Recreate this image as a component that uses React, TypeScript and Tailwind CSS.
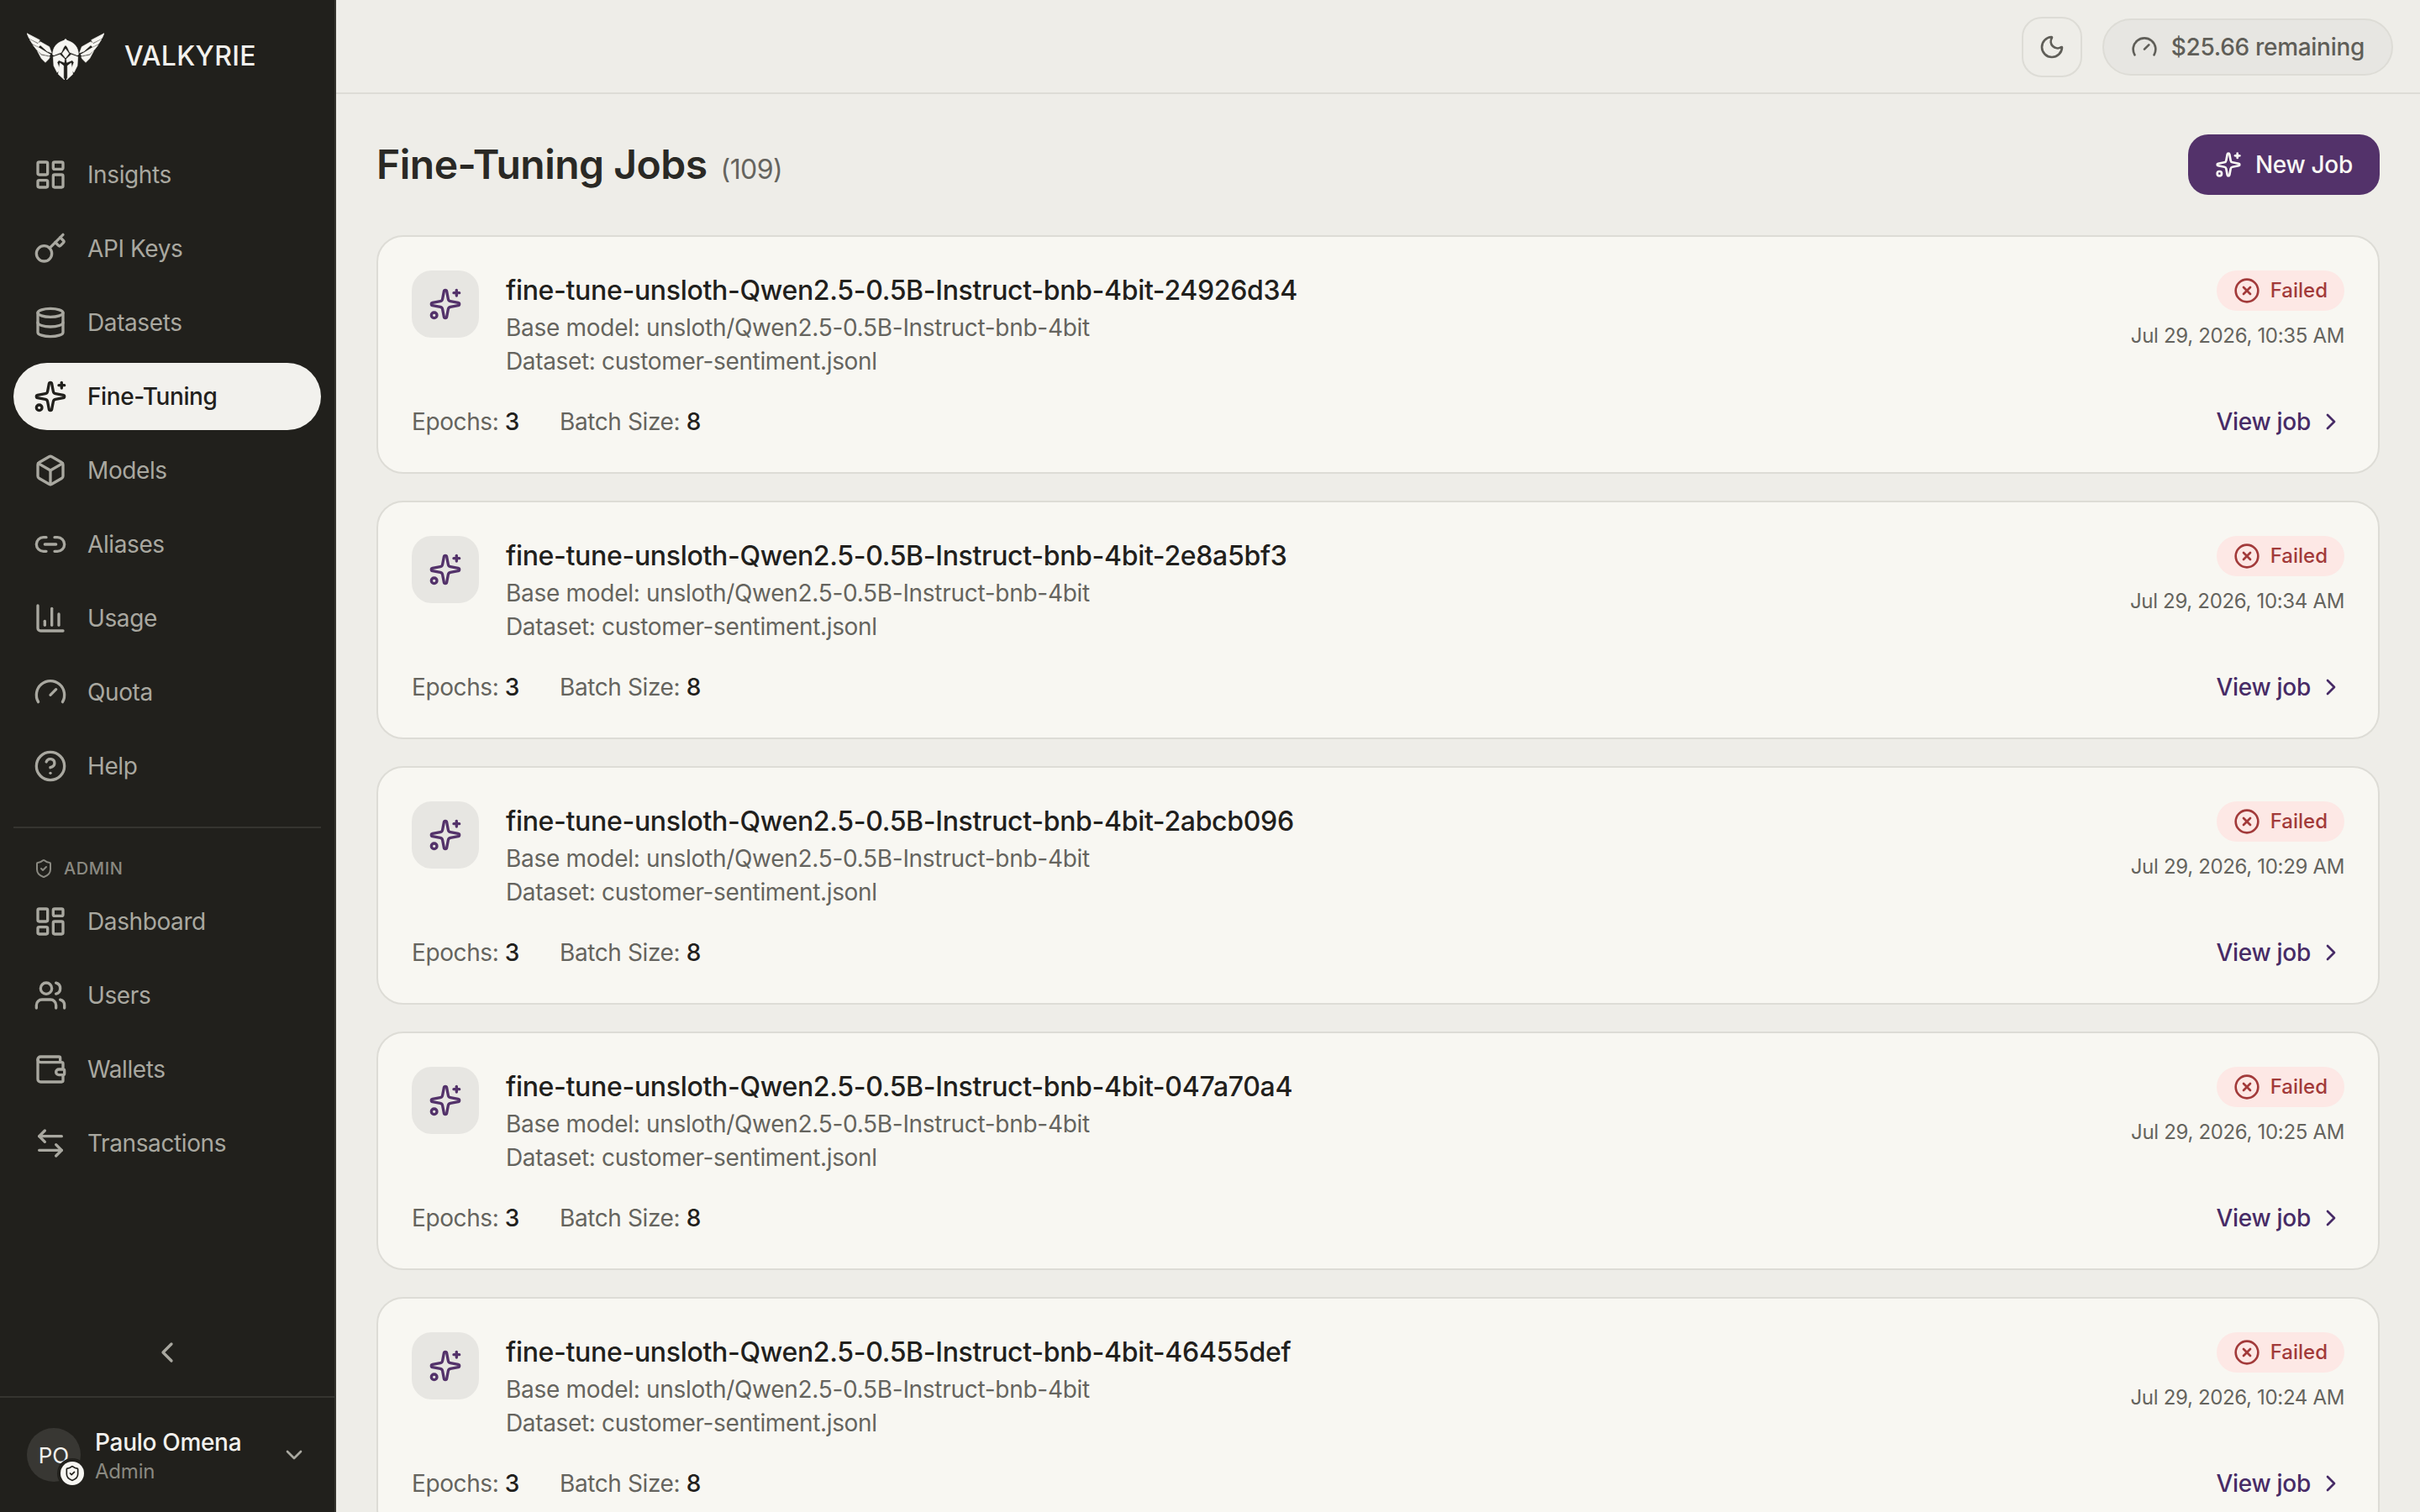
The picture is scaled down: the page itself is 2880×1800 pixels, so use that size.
import {
  ArrowLeftRight,
  Box,
  ChartColumn,
  ChevronDown,
  ChevronLeft,
  ChevronRight,
  CircleHelp,
  CircleX,
  Database,
  Gauge,
  Key,
  LayoutDashboard,
  Link2,
  Moon,
  ShieldCheck,
  Sparkles,
  Users,
  Wallet,
} from 'lucide-react';

const mainNav = [
  { label: 'Insights', icon: LayoutDashboard },
  { label: 'API Keys', icon: Key },
  { label: 'Datasets', icon: Database },
  { label: 'Fine-Tuning', icon: Sparkles, active: true },
  { label: 'Models', icon: Box },
  { label: 'Aliases', icon: Link2 },
  { label: 'Usage', icon: ChartColumn },
  { label: 'Quota', icon: Gauge },
  { label: 'Help', icon: CircleHelp },
];

const adminNav = [
  { label: 'Dashboard', icon: LayoutDashboard },
  { label: 'Users', icon: Users },
  { label: 'Wallets', icon: Wallet },
  { label: 'Transactions', icon: ArrowLeftRight },
];

const jobs = [
  { id: '24926d34', date: 'Jul 29, 2026, 10:35 AM' },
  { id: '2e8a5bf3', date: 'Jul 29, 2026, 10:34 AM' },
  { id: '2abcb096', date: 'Jul 29, 2026, 10:29 AM' },
  { id: '047a70a4', date: 'Jul 29, 2026, 10:25 AM' },
  { id: '46455def', date: 'Jul 29, 2026, 10:24 AM' },
];

const WingAndHelmetHalf = () => (
  <>
    <path d="M18 20 64 44 58 54 26 38Z" />
    <path d="M28 42 56 57 66 50 98 68 106 90 90 84 66 62 60 68 38 58Z" />
    <path d="M40 62 62 72 88 88 102 96 98 100 70 94 54 80Z" />
    <path d="M56 84 70 98 100 104 96 112 84 124 70 110Z" />
    <path d="M110 96C110 70 126 52 150 46V68L141 88 114 98Z" />
    <path d="M112 104 136 96 153 112 151 124 132 116 126 124 136 150 126 160 114 136Z" />
    <path d="M136 126 149 136V178L152 186 130 166Z" />
  </>
);

const Logo = () => (
  <svg
    viewBox="18 18 276 168"
    className="h-[56px] w-[92px] shrink-0"
    fill="#f7f6f2"
    stroke="#f7f6f2"
    strokeWidth={2}
    strokeLinejoin="round"
  >
    <WingAndHelmetHalf />
    <g transform="translate(312 0) scale(-1 1)">
      <WingAndHelmetHalf />
    </g>
    <path d="M156 40 164 48V70L156 62 148 70V48Z" />
    <path d="M156 76 168 92 156 108 144 92Z" />
  </svg>
);

const NavItem = ({ label, icon: Icon, active }: { label: string; icon: typeof Key; active?: boolean }) => (
  <div
    className={`flex h-[80px] items-center gap-[24px] rounded-full px-[24px] text-[28px] tracking-[-0.4px] ${
      active ? 'bg-[#f2f1ed] font-medium text-[#21201c]' : 'text-[#a9a8a0]'
    }`}
  >
    <Icon size={40} strokeWidth={2} className="shrink-0" />
    <span>{label}</span>
  </div>
);

const Sidebar = () => (
  <aside className="flex h-full w-[400px] shrink-0 flex-col border-r-2 border-[#35342f] bg-[#21201c]">
    <div className="flex h-[132px] items-center gap-[24px] pt-[2px] pl-[32px]">
      <Logo />
      <span className="text-[32px] font-medium tracking-[0.35px] text-[#f2f1ed]">VALKYRIE</span>
    </div>
    <nav className="mt-[36px] flex flex-col gap-[8px] px-[16px]">
      {mainNav.map((item) => (
        <NavItem key={item.label} {...item} />
      ))}
    </nav>
    <div className="mx-[16px] mt-[32px] border-t-2 border-[#35342f]" />
    <div className="mt-[32px] flex h-[32px] items-center gap-[12px] pl-[40px] text-[20px] font-medium tracking-[0.6px] text-[#8a8981]">
      <ShieldCheck size={24} strokeWidth={2} />
      <span>ADMIN</span>
    </div>
    <nav className="mt-[7px] flex flex-col gap-[8px] px-[16px]">
      {adminNav.map((item) => (
        <NavItem key={item.label} {...item} />
      ))}
    </nav>
    <div className="flex flex-1 items-end justify-center pb-[32px]">
      <ChevronLeft size={40} strokeWidth={2} className="text-[#a9a8a0]" />
    </div>
    <div className="flex h-[138px] items-center border-t-2 border-[#35342f] px-[32px]">
      <div className="relative flex h-[64px] w-[64px] shrink-0 items-center justify-center rounded-full bg-[#383733] text-[26px] text-[#f2f1ed]">
        PO
        <span className="absolute right-[-8px] bottom-[-8px] flex h-[36px] w-[36px] items-center justify-center rounded-full bg-[#21201c]">
          <span className="flex h-[28px] w-[28px] items-center justify-center rounded-full bg-[#f7f6f2] text-[#21201c]">
            <ShieldCheck size={20} strokeWidth={2} />
          </span>
        </span>
      </div>
      <div className="ml-[17px] flex flex-1 flex-col pt-[3px]">
        <span className="text-[28px] leading-[36px] font-medium tracking-[-0.3px] text-[#f2f1ed]">Paulo Omena</span>
        <span className="text-[24px] leading-[34px] tracking-[-0.2px] text-[#8a8981]">Admin</span>
      </div>
      <ChevronDown size={32} strokeWidth={2} className="text-[#a9a8a0]" />
    </div>
  </aside>
);

const Header = () => (
  <header className="flex h-[112px] shrink-0 items-center justify-end gap-[24px] border-b-2 border-[#dddcd6] pt-[2px] pr-[32px]">
    <button className="flex h-[72px] w-[72px] items-center justify-center rounded-[24px] border-2 border-[#dddcd6] text-[#5f5e58]">
      <Moon size={32} strokeWidth={2} />
    </button>
    <div className="flex h-[68px] items-center gap-[16px] rounded-full border-2 border-[#dddcd6] bg-[#e7e6e2] px-[32px] text-[28px] font-medium tracking-[-0.3px] text-[#5f5e58]">
      <Gauge size={32} strokeWidth={2} />
      <span>$25.66 remaining</span>
    </div>
  </header>
);

const JobCard = ({ id, date }: { id: string; date: string }) => (
  <div className="flex h-[284px] shrink-0 flex-col justify-between rounded-[32px] border-2 border-[#dddcd6] bg-[#f8f7f2] p-[40px]">
    <div className="flex items-start justify-between">
      <div className="flex gap-[32px]">
        <div className="flex h-[80px] w-[80px] items-center justify-center rounded-[24px] bg-[#e7e6e2] text-[#53326a]">
          <Sparkles size={40} strokeWidth={2} />
        </div>
        <div className="flex flex-col">
          <span className="text-[32px] leading-[48px] font-medium tracking-[-0.32px] text-[#21201c]">
            fine-tune-unsloth-Qwen2.5-0.5B-Instruct-bnb-4bit-{id}
          </span>
          <span className="text-[28px] leading-[40px] tracking-[-0.29px] text-[#65645e]">
            Base model: unsloth/Qwen2.5-0.5B-Instruct-bnb-4bit
          </span>
          <span className="text-[28px] leading-[40px] tracking-[-0.35px] text-[#65645e]">
            Dataset: customer-sentiment.jsonl
          </span>
        </div>
      </div>
      <div className="flex flex-col items-end gap-[14px]">
        <span className="flex h-[48px] items-center gap-[12px] rounded-full bg-[#fde8e5] px-[20px] text-[24px] font-medium text-[#a23a3a]">
          <CircleX size={32} strokeWidth={2} />
          Failed
        </span>
        <span className="text-[24px] leading-[32px] tracking-[-0.33px] text-[#65645e]">{date}</span>
      </div>
    </div>
    <div className="flex items-center justify-between text-[28px] leading-[40px] tracking-[-0.3px]">
      <div className="flex gap-[48px] tracking-[-0.4px] text-[#65645e]">
        <span>
          Epochs: <span className="font-medium text-[#21201c]">3</span>
        </span>
        <span>
          Batch Size: <span className="font-medium text-[#21201c]">8</span>
        </span>
      </div>
      <span className="flex items-center gap-[8px] font-medium text-[#472b66]">
        View job
        <ChevronRight size={32} strokeWidth={2} />
      </span>
    </div>
  </div>
);

export default function App() {
  return (
    <div className="flex h-screen w-full overflow-hidden bg-[#eeede8] font-['Inter',sans-serif]">
      <Sidebar />
      <main className="flex min-w-0 flex-1 flex-col overflow-hidden">
        <Header />
        <div className="flex flex-col px-[48px] pt-[48px]">
          <div className="mb-[48px] flex h-[72px] shrink-0 items-center justify-between">
            <h1 className="flex items-baseline gap-[16px] text-[48px] font-semibold tracking-[-0.5px] text-[#2a2925]">
              Fine-Tuning Jobs
              <span className="text-[32px] font-normal tracking-[-0.6px] text-[#65645e]">(109)</span>
            </h1>
            <button className="flex h-[72px] items-center gap-[16px] rounded-[24px] bg-[#53326a] px-[32px] text-[28px] font-medium tracking-[-0.3px] text-[#f9f8f4]">
              <Sparkles size={32} strokeWidth={2} />
              New Job
            </button>
          </div>
          <div className="flex flex-col gap-[32px]">
            {jobs.map((job) => (
              <JobCard key={job.id} {...job} />
            ))}
          </div>
        </div>
      </main>
    </div>
  );
}
